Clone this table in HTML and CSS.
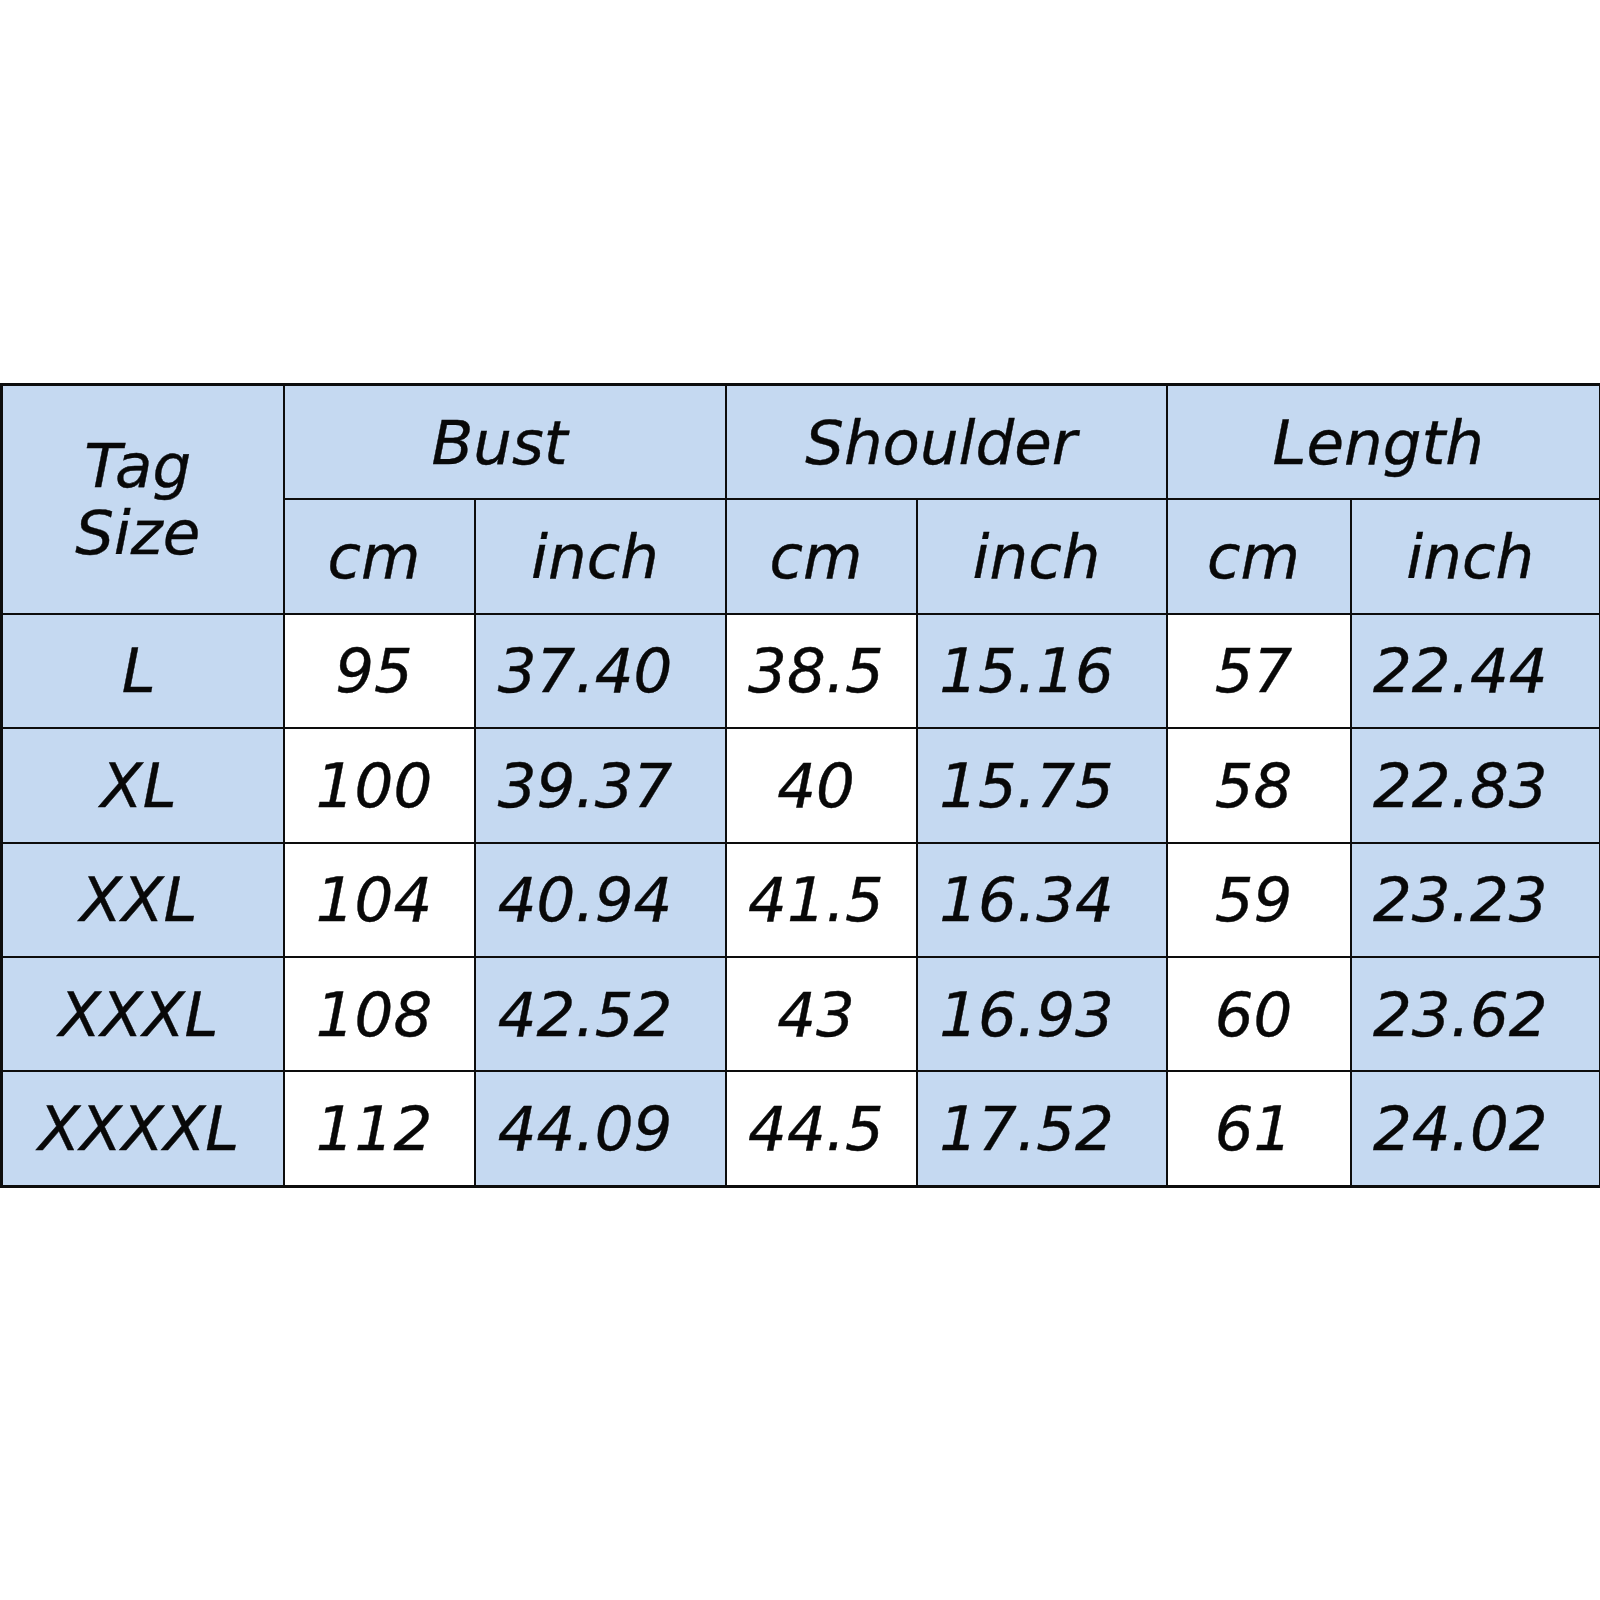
FILE: index.html
```html
<!DOCTYPE html>
<html>
<head>
<meta charset="utf-8">
<link rel="stylesheet" href="styles.css">
</head>
<body>
<table class="size-table">
  <colgroup>
    <col class="c-tag">
    <col class="c-cm1">
    <col class="c-in1">
    <col class="c-cm2">
    <col class="c-in2">
    <col class="c-cm3">
    <col class="c-in3">
  </colgroup>
  <thead>
    <tr>
      <th rowspan="2" class="tag">Tag<br>Size</th>
      <th colspan="2">Bust</th>
      <th colspan="2">Shoulder</th>
      <th colspan="2">Length</th>
    </tr>
    <tr>
      <th>cm</th><th>inch</th>
      <th>cm</th><th>inch</th>
      <th>cm</th><th>inch</th>
    </tr>
  </thead>
  <tbody>
    <tr><th class="size">L</th><td>95</td><td class="in">37.40</td><td>38.5</td><td class="in">15.16</td><td>57</td><td class="in">22.44</td></tr>
    <tr><th class="size">XL</th><td>100</td><td class="in">39.37</td><td>40</td><td class="in">15.75</td><td>58</td><td class="in">22.83</td></tr>
    <tr><th class="size">XXL</th><td>104</td><td class="in">40.94</td><td>41.5</td><td class="in">16.34</td><td>59</td><td class="in">23.23</td></tr>
    <tr><th class="size">XXXL</th><td>108</td><td class="in">42.52</td><td>43</td><td class="in">16.93</td><td>60</td><td class="in">23.62</td></tr>
    <tr><th class="size">XXXXL</th><td>112</td><td class="in">44.09</td><td>44.5</td><td class="in">17.52</td><td>61</td><td class="in">24.02</td></tr>
  </tbody>
</table>
</body>
</html>
```
FILE: styles.css
```css
html, body {
  margin: 0;
  padding: 0;
  background: #ffffff;
}

.size-table {
  margin-top: 383px;
  width: 1599px;
  table-layout: fixed;
  border-collapse: collapse;
  font-family: "DejaVu Sans", Verdana, sans-serif;
  font-style: italic;
  font-weight: normal;
  font-size: 61px;
  color: #080808;
  -webkit-text-stroke: 0.4px #080808;
  border: 3px solid #0d0d0d;
}

.c-tag { width: 282px; }
.c-cm1 { width: 191px; }
.c-in1 { width: 251px; }
.c-cm2 { width: 191px; }
.c-in2 { width: 250px; }
.c-cm3 { width: 184px; }
.c-in3 { width: 250px; }

.size-table th,
.size-table td {
  border: 2px solid #0d0d0d;
  height: 112.4px;
  padding: 0 10px 0 0;
  text-align: center;
  vertical-align: middle;
  font-weight: normal;
  line-height: 67px;
  background: #c5d9f1;
}

.size-table th.size {
  padding-right: 8px;
}

.size-table td {
  background: #ffffff;
}

.size-table td.in {
  background: #c5d9f1;
  padding-right: 30px;
}
```
